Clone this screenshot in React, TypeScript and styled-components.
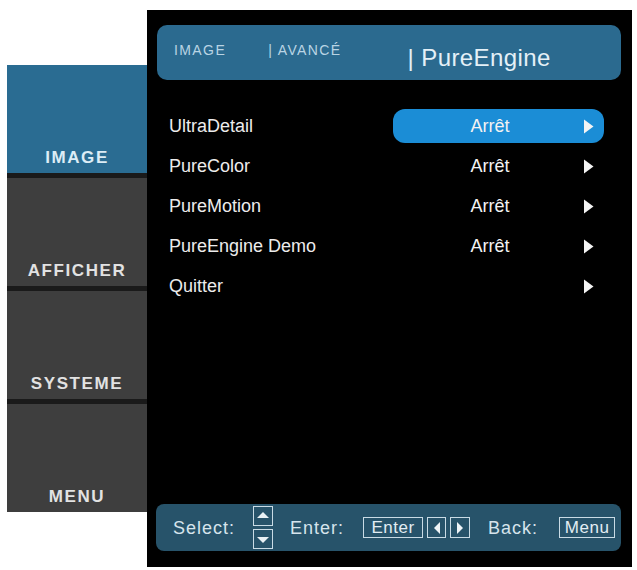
import React from 'react';
import styled, { createGlobalStyle } from 'styled-components';

const GlobalStyle = createGlobalStyle`
  body {
    margin: 0;
    background: #ffffff;
    font-family: "Liberation Sans", Arial, sans-serif;
  }
`;

const Page = styled.div`
  display: flex;
  align-items: flex-start;
  padding: 10px 0 0 7px;
`;

const Sidebar = styled.div`
  margin-top: 55px;
  width: 140px;
  display: flex;
  flex-direction: column;
  gap: 5px;
  background: #1a1a1a;
`;

const Tab = styled.div<{ $active?: boolean }>`
  height: 108px;
  display: flex;
  align-items: flex-end;
  justify-content: center;
  padding-bottom: 5px;
  box-sizing: border-box;
  background: ${(p) => (p.$active ? '#2a6c92' : '#3e3e3e')};
  color: ${(p) => (p.$active ? '#dcedf6' : '#e2e2e2')};
  font-size: 17px;
  font-weight: 700;
  letter-spacing: 1.6px;
  line-height: 20px;
`;

const Panel = styled.div`
  width: 485px;
  height: 557px;
  background: #000000;
  box-sizing: border-box;
  padding: 15px 11px 16px 10px;
  display: flex;
  flex-direction: column;
`;

const Header = styled.div`
  height: 55px;
  border-radius: 10px;
  background: #2b6a8f;
  display: flex;
  align-items: flex-start;
  padding-left: 17px;
  box-sizing: border-box;
`;

const Crumb = styled.span<{ $ml?: number }>`
  margin-left: ${(p) => p.$ml ?? 0}px;
  margin-top: 17px;
  color: #b9d4e4;
  font-size: 14px;
  letter-spacing: 1.4px;
  line-height: 16px;
`;

const Title = styled.span`
  margin-left: 66px;
  margin-top: 19px;
  color: #e4f0f7;
  font-size: 24px;
  line-height: 27px;
  letter-spacing: 0.4px;
`;

const List = styled.div`
  margin-top: 26px;
  padding: 0 17px 0 12px;
  display: flex;
  flex-direction: column;
`;

const Row = styled.div`
  height: 40px;
  display: grid;
  grid-template-columns: 224px 1fr;
  align-items: center;
`;

const Label = styled.span`
  color: #ececec;
  font-size: 18px;
  line-height: 22px;
`;

const ValueCell = styled.div<{ $selected?: boolean }>`
  height: 34px;
  border-radius: 12px;
  background: ${(p) => (p.$selected ? '#1b8dd6' : 'transparent')};
  display: flex;
  align-items: center;
  padding-right: 10px;
`;

const Value = styled.span`
  flex: 1;
  text-align: center;
  padding-left: 4px;
  color: #f2f2f2;
  font-size: 18px;
  line-height: 22px;
`;

const Spacer = styled.div`
  flex: 1;
`;

const Footer = styled.div`
  height: 47px;
  margin-left: -1px;
  border-radius: 8px;
  background: #27536a;
  display: flex;
  align-items: center;
  padding-left: 17px;
  box-sizing: border-box;
`;

const Hint = styled.span<{ $ml?: number }>`
  margin-left: ${(p) => p.$ml ?? 0}px;
  color: #d6e4ec;
  font-size: 18px;
  letter-spacing: 1px;
  line-height: 22px;
`;

const Key = styled.span<{ $ml?: number; $w: number }>`
  margin-left: ${(p) => p.$ml ?? 0}px;
  width: ${(p) => p.$w}px;
  height: 21px;
  box-sizing: border-box;
  border: 1px solid #c9dbe5;
  display: flex;
  align-items: center;
  justify-content: center;
  color: #e2edf3;
  font-size: 17px;
  letter-spacing: 0.5px;
  line-height: 18px;
`;

const UpDown = styled.div<{ $ml?: number }>`
  margin-left: ${(p) => p.$ml ?? 0}px;
  display: flex;
  flex-direction: column;
  gap: 3px;
`;

const Arrow = () => (
  <svg width="11" height="15" viewBox="0 0 11 15">
    <path d="M1 0.5 L10.5 7.5 L1 14.5 Z" fill="#f4f4f4" />
  </svg>
);

const BoxArrow = ({ dir }: { dir: 'up' | 'down' }) => (
  <svg width="20" height="20" viewBox="0 0 20 20">
    <rect x="0.5" y="0.5" width="19" height="19" fill="none" stroke="#c9dbe5" />
    <path d={dir === 'up' ? 'M4 12 L10 6 L16 12 Z' : 'M4 8 L10 14 L16 8 Z'} fill="#e8f0f4" />
  </svg>
);

const SideArrow = ({ dir }: { dir: 'left' | 'right' }) => (
  <svg width="10" height="14" viewBox="0 0 10 14">
    <path d={dir === 'left' ? 'M8 1 L2 7 L8 13 Z' : 'M2 1 L8 7 L2 13 Z'} fill="#eef4f7" />
  </svg>
);

const items = [
  { label: 'UltraDetail', value: 'Arrêt', selected: true },
  { label: 'PureColor', value: 'Arrêt' },
  { label: 'PureMotion', value: 'Arrêt' },
  { label: 'PureEngine Demo', value: 'Arrêt' },
  { label: 'Quitter', value: '' },
];

export default function App() {
  return (
    <>
      <GlobalStyle />
      <Page>
        <Sidebar>
          <Tab $active>IMAGE</Tab>
          <Tab>AFFICHER</Tab>
          <Tab>SYSTEME</Tab>
          <Tab>MENU</Tab>
        </Sidebar>
        <Panel>
          <Header>
            <Crumb>IMAGE</Crumb>
            <Crumb $ml={42}>| AVANCÉ</Crumb>
            <Title>| PureEngine</Title>
          </Header>
          <List>
            {items.map((it) => (
              <Row key={it.label}>
                <Label>{it.label}</Label>
                <ValueCell $selected={it.selected}>
                  <Value>{it.value}</Value>
                  <Arrow />
                </ValueCell>
              </Row>
            ))}
          </List>
          <Spacer />
          <Footer>
            <Hint>Select:</Hint>
            <UpDown $ml={18}>
              <BoxArrow dir="up" />
              <BoxArrow dir="down" />
            </UpDown>
            <Hint $ml={17}>Enter:</Hint>
            <Key $ml={19} $w={60}>Enter</Key>
            <Key $ml={4} $w={19}>
              <SideArrow dir="left" />
            </Key>
            <Key $ml={4} $w={20}>
              <SideArrow dir="right" />
            </Key>
            <Hint $ml={18}>Back:</Hint>
            <Key $ml={21} $w={56}>Menu</Key>
          </Footer>
        </Panel>
      </Page>
    </>
  );
}
